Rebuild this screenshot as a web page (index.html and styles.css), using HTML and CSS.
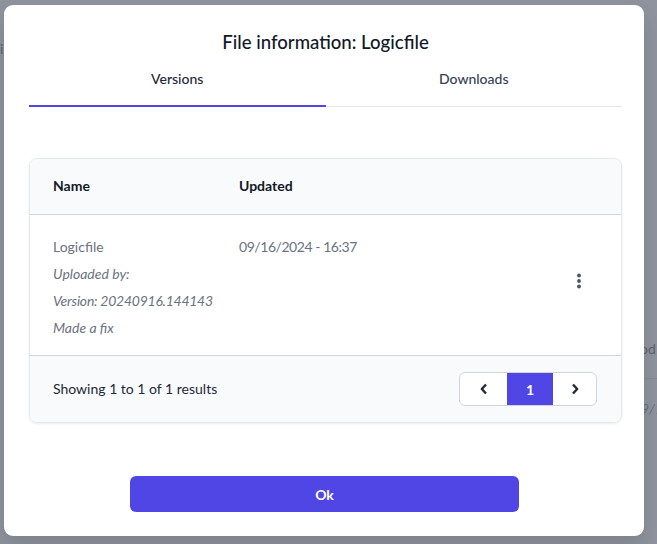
FILE: index.html
```html
<!DOCTYPE html>
<html lang="en">
<head>
<meta charset="utf-8">
<title>File information</title>
<link rel="stylesheet" href="styles.css">
</head>
<body>
<div class="backdrop">
  <span class="bg-text bg-i">i</span>
  <span class="bg-text bg-od">od</span>
  <div class="bg-line"></div>
  <span class="bg-text bg-date">9/1</span>
</div>
<div class="overlay">
  <div class="modal">
    <h2 class="title">File information: Logicfile</h2>
    <div class="tabs">
      <div class="tab active">Versions</div>
      <div class="tab">Downloads</div>
    </div>
    <div class="card">
      <div class="thead">
        <div class="col-name">Name</div>
        <div class="col-updated">Updated</div>
      </div>
      <div class="row">
        <div class="col-name">
          <div class="line">Logicfile</div>
          <div class="line italic">Uploaded by:</div>
          <div class="line italic"><span class="num">Version: 20240916.144143</span></div>
          <div class="line italic">Made a fix</div>
        </div>
        <div class="col-updated">
          <div class="line"><span class="num date">09/16/2024 - 16:37</span></div>
        </div>
        <div class="col-actions">
          <svg class="kebab" width="6" height="16" viewBox="0 0 6 16" aria-hidden="true">
            <circle cx="3" cy="2.5" r="1.9" fill="#4b5563"/>
            <circle cx="3" cy="8" r="1.9" fill="#4b5563"/>
            <circle cx="3" cy="13.5" r="1.9" fill="#4b5563"/>
          </svg>
        </div>
      </div>
      <div class="tfoot">
        <div class="showing">Showing 1 to 1 of 1 results</div>
        <div class="pager">
          <div class="pg pg-prev">
            <svg width="10" height="12" viewBox="0 0 10 12" aria-hidden="true"><path d="M7 1.5 L2.8 6 L7 10.5" fill="none" stroke="#1f2937" stroke-width="2.4" stroke-linejoin="round"/></svg>
          </div>
          <div class="pg pg-current">1</div>
          <div class="pg pg-next">
            <svg width="10" height="12" viewBox="0 0 10 12" aria-hidden="true"><path d="M3 1.5 L7.2 6 L3 10.5" fill="none" stroke="#1f2937" stroke-width="2.4" stroke-linejoin="round"/></svg>
          </div>
        </div>
      </div>
    </div>
    <div class="actions">
      <button class="ok" type="button">Ok</button>
    </div>
  </div>
</div>
</body>
</html>
```
FILE: styles.css
```css
* { box-sizing: border-box; }

html, body {
  margin: 0;
  padding: 0;
  width: 657px;
  height: 544px;
  overflow: hidden;
}

body {
  background: #8f939d;
  font-family: Lato, "Noto Sans", sans-serif;
  font-size: 14px;
  color: #111827;
  position: relative;
}

.backdrop {
  position: absolute;
  inset: 0;
}

.bg-text {
  position: absolute;
  color: #5d616b;
  font-size: 14px;
}
.bg-i { left: 0; top: 40px; }
.bg-od { left: 640px; top: 340px; }
.bg-date { left: 641px; top: 400px; font-style: italic; color: #6b6f79; }
.bg-line {
  position: absolute;
  left: 644px;
  top: 378px;
  width: 13px;
  height: 1px;
  background: #858993;
}

.overlay {
  position: relative;
  padding: 5px 0 0 4px;
}

.modal {
  width: 640px;
  height: 531px;
  background: #ffffff;
  border-radius: 9px;
  padding: 23px 22px 24px 25px;
  box-shadow: 0 10px 20px rgba(0, 0, 0, 0.12);
  display: flex;
  flex-direction: column;
}

.title {
  margin: 0;
  font-size: 18.6px;
  line-height: 28px;
  font-weight: 500;
  text-align: center;
  color: #111827;
}

.tabs {
  display: flex;
  margin-top: 1px;
  border-bottom: 1px solid #e5e7eb;
}

.tab {
  flex: 1;
  text-align: center;
  padding: 12px 0 16px;
  line-height: 20px;
  font-size: 14px;
  font-weight: 500;
  color: #374151;
}

.tab.active {
  color: #1f2937;
  border-bottom: 2px solid #4f46e5;
  margin-bottom: -1px;
}

.card {
  margin-top: 51px;
  border: 1px solid #e5e7eb;
  border-radius: 8px;
  overflow: hidden;
  box-shadow: 0 1px 3px rgba(0, 0, 0, 0.08);
}

.thead {
  display: flex;
  background: #f9fafb;
  padding: 17px 24px 18px 23px;
  line-height: 20px;
  font-weight: 700;
  color: #111827;
  border-bottom: 1px solid #d1d5db;
}

.col-name { width: 186px; }
.col-updated { flex: 1; }

.row {
  display: flex;
  padding: 22px 24px 17px 23px;
  color: #6b7280;
  line-height: 20px;
}

.line + .line { margin-top: 7px; }
.italic { font-style: italic; }
.num { letter-spacing: -0.25px; }
.num.date { letter-spacing: -0.45px; }

.col-actions {
  display: flex;
  align-items: center;
  padding: 0 15px 14px 0;
}

.kebab { display: block; }

.tfoot {
  display: flex;
  align-items: center;
  justify-content: space-between;
  background: #f9fafb;
  border-top: 1px solid #d1d5db;
  padding: 16px 24px 16px 23px;
}

.showing {
  line-height: 20px;
  color: #1f2937;
}

.pager {
  display: flex;
  height: 34px;
  border: 1px solid #d1d5db;
  border-radius: 6px;
  overflow: hidden;
  background: #ffffff;
}

.pg {
  display: flex;
  align-items: center;
  justify-content: center;
  height: 100%;
}

.pg-prev { width: 47px; }
.pg-current {
  width: 46px;
  background: #4f46e5;
  color: #ffffff;
  font-weight: 700;
}
.pg-next { width: 43px; }

.actions {
  margin-top: 53px;
  display: flex;
  justify-content: center;
}

.ok {
  width: 389px;
  height: 36px;
  margin-left: -2px;
  border: none;
  border-radius: 6px;
  background: #4f46e5;
  color: #ffffff;
  font-family: Lato, "Noto Sans", sans-serif;
  font-size: 14px;
  font-weight: 700;
}
```
